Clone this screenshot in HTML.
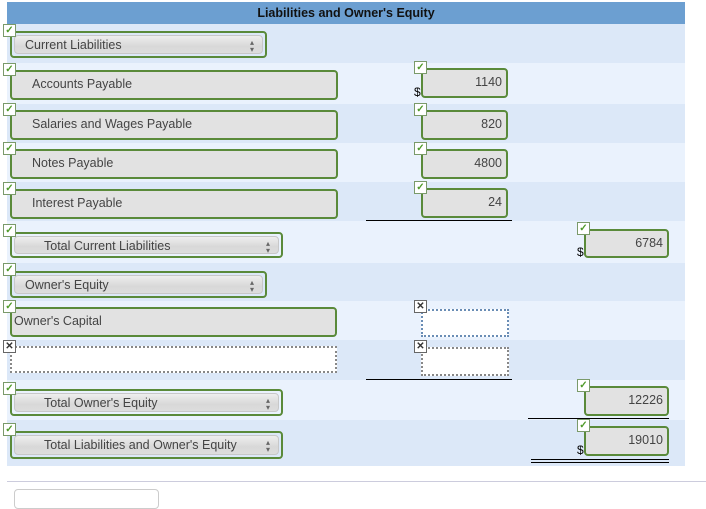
<!DOCTYPE html>
<html><head><meta charset="utf-8"><style>
*{box-sizing:border-box;margin:0;padding:0}
body{width:706px;height:495px;background:#fff;position:relative;overflow:hidden;font-family:"Liberation Sans",Arial,sans-serif;font-size:12.5px;color:#444}
.a{position:absolute}
.hdr{left:7px;top:2px;width:678px;height:22px;background:#6c9fd1;color:#111;font-weight:bold;text-align:center;line-height:22px;font-size:12.5px}
.r{position:absolute;left:7px;width:678px}
.d{background:#dce8f8}.l{background:#eaf2fd}
.f{position:absolute;border:2px solid #5a8a3a;border-radius:4px;background:#e2e2e2;line-height:25px;padding-left:20px}
.n{position:absolute;border:2px solid #5a8a3a;border-radius:4px;background:#e2e2e2;text-align:right;padding-right:4px;line-height:24px}
.s{position:absolute;border:2px solid #5a8a3a;border-radius:4px;background:transparent;padding:2px}
.s div{height:100%;border-radius:4px;background:linear-gradient(#eee,#d8d8d8 60%,#ddd);border:1px solid #c8c8c8;line-height:19px;position:relative}
.s div:after{content:"\25B4\A\25BE";white-space:pre;position:absolute;right:8px;top:3px;font-size:8px;line-height:7px;color:#666}
.c{position:absolute;width:13px;height:13px;border:1px solid #7a9a6a;background:#fff;font-size:10px;font-weight:bold;line-height:11px;text-align:center;color:#4f9a2a}
.x{color:#333;border-color:#666}
.dot{position:absolute;border:2px dotted #888;background:#fff}
.ln{position:absolute;height:1px;background:#000}
.dl{position:absolute;font-size:12px;color:#000}
</style></head><body>
<div class="a hdr">Liabilities and Owner's Equity</div>
<div class="r d" style="top:24px;height:39px"></div>
<div class="r l" style="top:63px;height:41px"></div>
<div class="r d" style="top:104px;height:39px"></div>
<div class="r l" style="top:143px;height:39px"></div>
<div class="r d" style="top:182px;height:39px"></div>
<div class="r l" style="top:221px;height:42px"></div>
<div class="r d" style="top:263px;height:38px"></div>
<div class="r l" style="top:301px;height:39px"></div>
<div class="r d" style="top:340px;height:40px"></div>
<div class="r l" style="top:380px;height:40px"></div>
<div class="r d" style="top:420px;height:46px"></div>

<div class="s" style="left:10px;top:31px;width:257px;height:27px"><div style="padding-left:10px">Current Liabilities</div></div>
<div class="c" style="left:3px;top:24px">✓</div>

<div class="f" style="left:10px;top:70px;width:328px;height:30px">Accounts Payable</div>
<div class="c" style="left:3px;top:63px">✓</div>
<div class="f" style="left:10px;top:110px;width:328px;height:30px">Salaries and Wages Payable</div>
<div class="c" style="left:3px;top:103px">✓</div>
<div class="f" style="left:10px;top:149px;width:328px;height:30px">Notes Payable</div>
<div class="c" style="left:3px;top:142px">✓</div>
<div class="f" style="left:10px;top:189px;width:328px;height:30px">Interest Payable</div>
<div class="c" style="left:3px;top:182px">✓</div>

<div class="n" style="left:421px;top:68px;width:87px;height:30px">1140</div>
<div class="c" style="left:414px;top:61px">✓</div>
<div class="dl" style="left:414px;top:85px">$</div>
<div class="n" style="left:421px;top:110px;width:87px;height:30px">820</div>
<div class="c" style="left:414px;top:103px">✓</div>
<div class="n" style="left:421px;top:149px;width:87px;height:30px">4800</div>
<div class="c" style="left:414px;top:142px">✓</div>
<div class="n" style="left:421px;top:188px;width:87px;height:30px">24</div>
<div class="c" style="left:414px;top:181px">✓</div>
<div class="ln" style="left:366px;top:220px;width:146px"></div>

<div class="s" style="left:10px;top:232px;width:273px;height:26px"><div style="padding-left:29px">Total Current Liabilities</div></div>
<div class="c" style="left:3px;top:224px">✓</div>
<div class="n" style="left:584px;top:229px;width:85px;height:29px">6784</div>
<div class="c" style="left:577px;top:222px">✓</div>
<div class="dl" style="left:577px;top:245px">$</div>

<div class="s" style="left:10px;top:271px;width:257px;height:27px"><div style="padding-left:10px">Owner's Equity</div></div>
<div class="c" style="left:3px;top:263px">✓</div>

<div class="f" style="left:10px;top:307px;width:327px;height:30px;padding-left:2px">Owner's Capital</div>
<div class="c" style="left:3px;top:300px">✓</div>
<div class="dot" style="left:421px;top:309px;width:88px;height:28px;border-color:#6a8db5"></div>
<div class="c x" style="left:414px;top:300px">✕</div>

<div class="dot" style="left:10px;top:346px;width:327px;height:27px"></div>
<div class="c x" style="left:3px;top:340px">✕</div>
<div class="dot" style="left:421px;top:347px;width:88px;height:29px"></div>
<div class="c x" style="left:414px;top:340px">✕</div>
<div class="ln" style="left:366px;top:379px;width:146px"></div>

<div class="s" style="left:10px;top:389px;width:273px;height:27px"><div style="padding-left:29px">Total Owner's Equity</div></div>
<div class="c" style="left:3px;top:382px">✓</div>
<div class="n" style="left:584px;top:386px;width:85px;height:30px">12226</div>
<div class="c" style="left:577px;top:379px">✓</div>
<div class="ln" style="left:528px;top:418px;width:141px"></div>

<div class="s" style="left:10px;top:431px;width:273px;height:28px"><div style="padding-left:29px">Total Liabilities and Owner's Equity</div></div>
<div class="c" style="left:3px;top:423px">✓</div>
<div class="n" style="left:584px;top:426px;width:85px;height:30px">19010</div>
<div class="c" style="left:577px;top:419px">✓</div>
<div class="dl" style="left:577px;top:443px">$</div>
<div class="ln" style="left:531px;top:459px;width:138px"></div>
<div class="ln" style="left:531px;top:462px;width:138px"></div>

<div class="a" style="left:7px;top:481px;width:699px;height:1px;background:#ccd"></div>
<div class="a" style="left:14px;top:489px;width:145px;height:20px;border:1px solid #ccc;border-radius:4px;background:#fff"></div>
</body></html>
